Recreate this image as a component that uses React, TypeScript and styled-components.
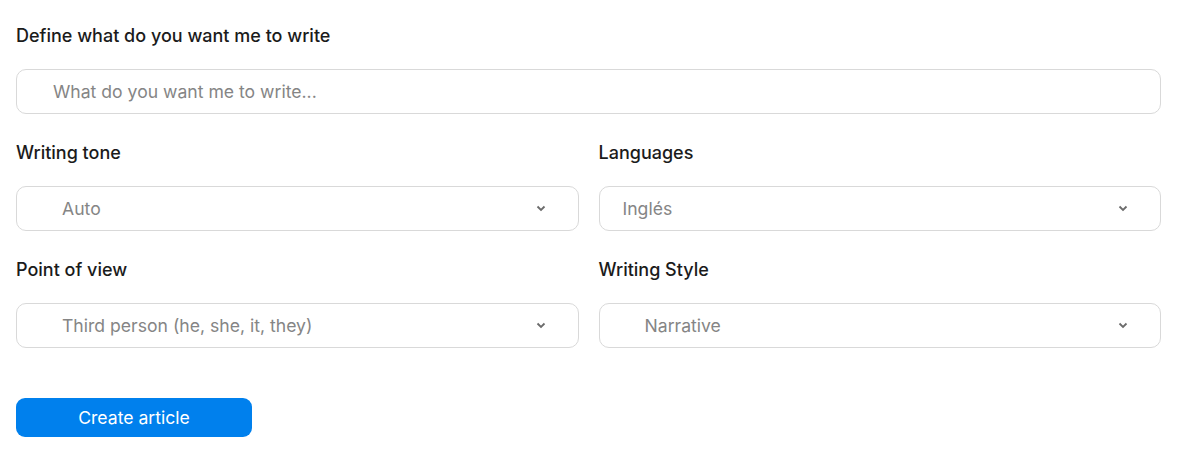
import React from "react";
import styled, { createGlobalStyle } from "styled-components";

const Global = createGlobalStyle`
  body { margin: 0; background: #fff; font-family: Inter, "Noto Sans", sans-serif; }
`;

const Page = styled.div`
  padding: 24px 20px 20px 16px;
  display: flex;
  flex-direction: column;
`;

const Field = styled.div`
  display: flex;
  flex-direction: column;
  gap: 21px;
`;

const Label = styled.div`
  font-size: 18px;
  font-weight: 500;
  color: #1b1b1b;
  line-height: 24px;
`;

const Input = styled.input`
  box-sizing: border-box;
  height: 45px;
  width: 100%;
  border: 1px solid #d9d9d9;
  border-radius: 10px;
  padding: 0 0 0 36px;
  font-family: Inter, sans-serif;
  font-size: 17.6px;
  color: #333;
  outline: none;
  &::placeholder { color: #858585; }
`;

const Grid = styled.div`
  display: grid;
  grid-template-columns: 1fr 1fr;
  column-gap: 20px;
  row-gap: 27px;
  margin-top: 27px;
`;

const SelectBox = styled.div<{ $pad: number }>`
  box-sizing: border-box;
  height: 45px;
  border: 1px solid #d9d9d9;
  border-radius: 10px;
  display: flex;
  align-items: center;
  justify-content: space-between;
  padding: 0 32px 0 ${(p) => p.$pad}px;
  font-size: 17.6px;
  color: #858585;
`;

const Chevron = () => (
  <svg width="10" height="7" viewBox="0 0 10 7">
    <path d="M1.5 1.5 L5 5 L8.5 1.5" fill="none" stroke="#6b6b6b" strokeWidth="1.8" />
  </svg>
);

const Button = styled.button`
  margin-top: 50px;
  width: 236px;
  height: 39px;
  border: none;
  border-radius: 9px;
  background: #0080ed;
  color: #fff;
  font-family: Inter, sans-serif;
  font-size: 17.6px;
  cursor: pointer;
`;

const Select = ({ label, value, pad }: { label: string; value: string; pad: number }) => (
  <Field>
    <Label>{label}</Label>
    <SelectBox $pad={pad}>
      <span>{value}</span>
      <Chevron />
    </SelectBox>
  </Field>
);

export default function App() {
  return (
    <>
      <Global />
      <Page>
        <Field>
          <Label>Define what do you want me to write</Label>
          <Input placeholder="What do you want me to write..." />
        </Field>
        <Grid>
          <Select label="Writing tone" value="Auto" pad={45} />
          <Select label="Languages" value="Inglés" pad={23} />
          <Select label="Point of view" value="Third person (he, she, it, they)" pad={45} />
          <Select label="Writing Style" value="Narrative" pad={45} />
        </Grid>
        <div>
          <Button>Create article</Button>
        </div>
      </Page>
    </>
  );
}
